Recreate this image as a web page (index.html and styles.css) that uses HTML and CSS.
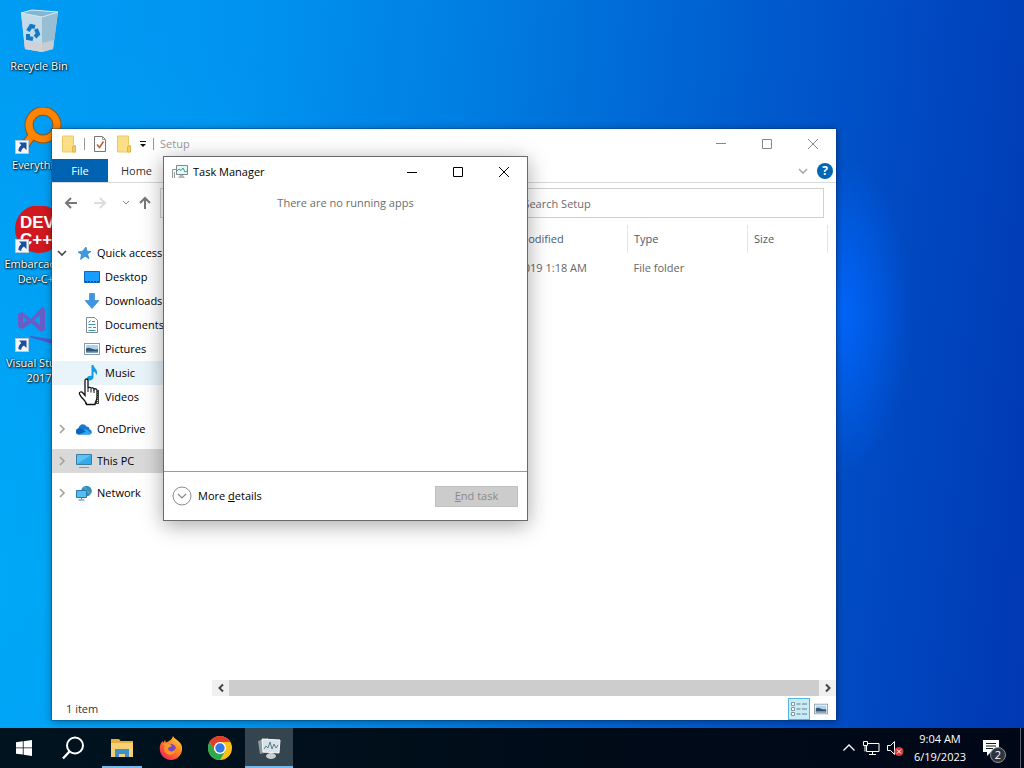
FILE: index.html
```html
<!DOCTYPE html>
<html lang="en">
<head>
    <meta charset="UTF-8">
    <meta name="viewport" content="width=device-width, initial-scale=1.0">
    <title>Desktop</title>
    <link rel="stylesheet" href="styles.css">
</head>
<body>
    <!-- Shared symbols -->
    <svg class="defs" aria-hidden="true">
        <symbol id="shortcut" viewBox="0 0 14 14">
            <rect x="0.5" y="0.5" width="13" height="13" fill="#f4f8fc" stroke="#b8c8d8"/>
            <path d="M4 2.500h7.500v7.500l-2.600-2.500C7 8.600 6.300 10 6.200 12L3.400 11C3.400 8.500 4.400 6.500 6.300 5z" fill="#1b4f9c"/>
        </symbol>
        <symbol id="folder" viewBox="0 0 16 18">
            <path d="M1.500 1h11v9.500h2V17h-13z" fill="#fbdf86" stroke="#edc964"/>
            <path d="M11.500 11.500h3V17h-3z" fill="#f6d063" stroke="#dfb64c"/>
        </symbol>
        <symbol id="chev-right" viewBox="0 0 10 10">
            <path d="M3 1l4 4-4 4" fill="none" stroke="#a0a0a0" stroke-width="1.600"/>
        </symbol>
        <symbol id="picture" viewBox="0 0 16 16">
            <rect x="0.500" y="2.500" width="15" height="11" fill="#fff" stroke="#8c9aa6"/>
            <path d="M2 4h12v4H2z" fill="#a9d4f4"/>
            <path d="M2 7.500c3-2 5 0 7 .5s4 .5 5 0V12H2z" fill="#35556e"/>
            <path d="M2 10.500h12V12H2z" fill="#7fa6bf"/>
        </symbol>
    </svg>

    <main class="desktop">
        <div class="icons">
            <a class="shortcut" href="#">
                <svg viewBox="0 0 48 48">
                    <path d="M6 5l11-3 26 2-5 37-11 3-17-3z" fill="#b9d6e6" opacity=".9"/>
                    <path d="M6 5l21 4 1 35-18-3z" fill="#c3dae8"/>
                    <path d="M27 9l16-5-5 37-11 3z" fill="#98bed3"/>
                    <path d="M9 33l18 2 12-3-1 9-11 3-17-3z" fill="#d3d0d2" opacity=".8"/>
                    <path d="M6 5l11-3 26 2-16 5z" fill="#82b6d3" stroke="#d6e9f2"/>
                    <g fill="none" stroke="#1279c9" stroke-width="4">
                        <path d="M13 23l3-5 4 1"/>
                        <path d="M21 21l2 5-3 3"/>
                        <path d="M18 31l-5-1v-4"/>
                    </g>
                </svg>
                <span>Recycle Bin</span>
            </a>
            <a class="shortcut" href="#">
                <svg viewBox="0 0 48 48">
                    <path d="M18 27L8 41" stroke="#8a5420" stroke-width="9"/>
                    <circle cx="28" cy="18" r="14" fill="none" stroke="#8a5420" stroke-width="9"/>
                    <path d="M18 27L8 41" stroke="#ff8500" stroke-width="7"/>
                    <circle cx="28" cy="18" r="14" fill="none" stroke="#ff8500" stroke-width="7"/>
                    <use href="#shortcut" x="0" y="33" width="14" height="14"/>
                </svg>
                <span>Everything</span>
            </a>
            <a class="shortcut" href="#">
                <svg viewBox="0 0 48 48">
                    <circle cx="24" cy="23" r="24" fill="#cf1820"/>
                    <text x="5" y="22" class="dev-logo">DEV</text>
                    <text x="5" y="39" class="dev-logo">C++</text>
                    <use href="#shortcut" x="0" y="33" width="14" height="14"/>
                </svg>
                <span>Embarcadero Dev-C++</span>
            </a>
            <a class="shortcut" href="#">
                <svg viewBox="0 0 48 48">
                    <path d="M3 9l4-2 9 7L27 2l3 2v21l-4 2-10-9-8 6-5-2z M8 12v6l4-3z M25 10l-6 5 6 5z" fill="#6b5cc5" fill-rule="evenodd"/>
                    <path d="M14 32l34 10v-6L16 31z" fill="#4b5bc4"/>
                    <use href="#shortcut" x="0" y="33" width="14" height="14"/>
                </svg>
                <span>Visual Studio 2017</span>
            </a>
        </div>

        <!-- File Explorer -->
        <section class="window explorer">
            <header class="ex-title">
                <svg class="i18" viewBox="0 0 16 18"><use href="#folder"/></svg>
                <i class="sep"></i>
                <svg class="i18" viewBox="0 0 16 18">
                    <path d="M2.500 1.500h8l3 3v12h-11z" fill="#fff" stroke="#777"/>
                    <path d="M10.500 1.500v3h3" fill="none" stroke="#999"/>
                    <path d="M5 9.500l2.500 3 4-6" fill="none" stroke="#c4582c" stroke-width="1.500"/>
                </svg>
                <svg class="i18" viewBox="0 0 16 18"><use href="#folder"/></svg>
                <svg class="i8" viewBox="0 0 8 8"><path d="M1 1.500h6" stroke="#111"/><path d="M1 4h6L4 7z" fill="#111"/></svg>
                <i class="sep"></i>
                <span class="ex-name">Setup</span>
                <div class="win-buttons">
                    <button aria-label="Minimize"><svg viewBox="0 0 12 12"><path d="M1 5.500h10"/></svg></button>
                    <button aria-label="Maximize"><svg viewBox="0 0 12 12"><path d="M1.500 1.500h9v9h-9z"/></svg></button>
                    <button aria-label="Close"><svg viewBox="0 0 12 12"><path d="M1 1l10 10M11 1L1 11"/></svg></button>
                </div>
            </header>
            <nav class="ribbon">
                <button class="tab file">File</button>
                <button class="tab">Home</button>
                <svg class="ribbon-toggle" viewBox="0 0 10 10"><path d="M1 3l4 4 4-4" fill="none" stroke="#a8a8a8" stroke-width="1.600"/></svg>
                <button class="help" aria-label="Help">?</button>
            </nav>
            <div class="nav-bar">
                <button aria-label="Back"><svg class="i14" viewBox="0 0 14 14"><path d="M13 7H2M7 2L2 7l5 5" stroke="#777"/></svg></button>
                <button class="forward" aria-label="Forward"><svg class="i14" viewBox="0 0 14 14"><path d="M1 7h11M7 2l5 5-5 5" stroke="#dcdcdc"/></svg></button>
                <button class="recent" aria-label="Recent locations"><svg class="i8" viewBox="0 0 8 8"><path d="M1 2l3 3 3-3" stroke="#888"/></svg></button>
                <button aria-label="Up"><svg class="i14" viewBox="0 0 14 14"><path d="M7 13V2M2 7l5-5 5 5" stroke="#777"/></svg></button>
                <input class="address" type="text" aria-label="Address">
                <input class="search" type="text" aria-label="Search" placeholder="Search Setup">
            </div>
            <div class="ex-body">
                <nav class="tree">
                    <a class="root" href="#">
                        <svg class="i10" viewBox="0 0 10 10"><path d="M1 3l4 4 4-4" fill="none" stroke="#444" stroke-width="1.600"/></svg>
                        <svg class="i16" viewBox="0 0 16 16"><path d="M10 2l1 4.200 4 .3-3.500 2.700 1.500 4.500-4-2.500L4.500 14.500l1-5L2 7l4.500-.8z" fill="#3a9be4" stroke="#2477b8" stroke-width=".6"/></svg>
                        Quick access
                    </a>
                    <a class="sub" href="#">
                        <svg class="i16" viewBox="0 0 16 16"><path d="M.5 2.500h15v11H.5z" fill="#1a9cff" stroke="#0b69b7"/><path d="M1 12.500h14" stroke="#0a4d86" stroke-dasharray="2 1"/></svg>
                        Desktop
                    </a>
                    <a class="sub" href="#">
                        <svg class="i16" viewBox="0 0 16 16"><path d="M5.500 .5h5v7H15L8 15.500 1 7.500h4.500z" fill="#3d95e6" stroke="#2d7cc4" stroke-width=".6"/></svg>
                        Downloads
                    </a>
                    <a class="sub" href="#">
                        <svg class="i16" viewBox="0 0 16 16"><path d="M2.500.5h8l3 3v12h-11z" fill="#fff" stroke="#7c8a93"/><path d="M8 4.500h3M4.500 7.500h7M4.500 10.500h3M9 10.500h3M4.500 13.500h7" stroke="#3b9ba0"/><path d="M4.500 5.500l2-2" stroke="#3b7ba0"/></svg>
                        Documents
                    </a>
                    <a class="sub" href="#">
                        <svg class="i16" viewBox="0 0 16 16"><use href="#picture"/></svg>
                        Pictures
                    </a>
                    <a class="sub hover" href="#">
                        <svg class="i16" viewBox="0 0 16 16"><path d="M7.500 0h2c0 3 4.500 4 3.500 9l-1 1c0-2-1-3-2.500-3.500V12c0 4-6.500 4.500-6.500 1.500 0-2.500 3-3 4.500-2.500z" fill="#149be6"/></svg>
                        Music
                    </a>
                    <a class="sub" href="#">
                        <svg class="i16" viewBox="0 0 16 16"><path d="M1 1h14v14H1z" fill="#444"/><path d="M4 2h8v12H4z" fill="#9b7468"/><path d="M2.500 1v14M13.500 1v14" stroke="#ddd" stroke-dasharray="1 1"/></svg>
                        Videos
                    </a>
                    <a class="root apart" href="#">
                        <svg class="i10" viewBox="0 0 10 10"><use href="#chev-right"/></svg>
                        <svg class="i16" viewBox="0 0 16 16"><path d="M3 13.500a3 3 0 0 1-.5-6C3 3 8 1.500 10.500 5.500c2 0 3 1 3 3 3 .5 3 5 0 5z" fill="#1579d1"/><path d="M3 13.500L10 8l5 4c-.5 1-1 1.500-2 1.500z" fill="#2aa7ee"/><path d="M2 7.500c2-.5 3.500 0 5 1.500l3 1.500-7 3C-.5 13-.5 8.500 2 7.500z" fill="#0c63b8"/></svg>
                        OneDrive
                    </a>
                    <a class="root apart selected" href="#">
                        <svg class="i10" viewBox="0 0 10 10"><use href="#chev-right"/></svg>
                        <svg class="i16" viewBox="0 0 16 16"><path d="M.5 1.500h15v10H.5z" fill="#5cc3f5" stroke="#3b7ea5"/><path d="M1 11L15 2v9z" fill="#38a9e8"/><path d="M3 14.500h10" stroke="#6aa5cf"/></svg>
                        This PC
                    </a>
                    <a class="root apart" href="#">
                        <svg class="i10" viewBox="0 0 10 10"><use href="#chev-right"/></svg>
                        <svg class="i16" viewBox="0 0 16 16"><circle cx="10.500" cy="6" r="5.300" fill="#3390bd"/><path d="M8 2c3 1 1 3 3 4s2 3 4 2" fill="none" stroke="#5fb0b0" stroke-width="1.200"/><path d="M.5 5.500h10v7H.5z" fill="#55bdf2" stroke="#2a79a8"/><path d="M2.500 15h6M5.500 12.500v2" stroke="#3c87b4"/></svg>
                        Network
                    </a>
                </nav>
                <div class="files">
                    <table>
                        <colgroup><col><col class="c-date"><col class="c-type"><col class="c-size"></colgroup>
                        <thead>
                            <tr><th></th><th>Date modified</th><th>Type</th><th>Size</th></tr>
                        </thead>
                        <tbody>
                            <tr><td></td><td>7/19/2019 1:18 AM</td><td>File folder</td><td></td></tr>
                        </tbody>
                    </table>
                    <div class="scrollbar">
                        <button aria-label="Scroll left"><svg class="i10" viewBox="0 0 10 10"><path d="M7 1.500L3.500 5 7 8.500"/></svg></button>
                        <div class="thumb"></div>
                        <button aria-label="Scroll right"><svg class="i10" viewBox="0 0 10 10"><path d="M3 1.500L6.500 5 3 8.500"/></svg></button>
                    </div>
                </div>
            </div>
            <footer class="status">
                <span>1 item</span>
                <button class="view on" aria-label="Details view">
                    <svg class="i16" viewBox="0 0 16 16"><path d="M.5 1.500h3v3h-3zM.5 6.500h3v3h-3zM.5 11.500h3v3h-3z" fill="#fff" stroke="#8295a0"/><path d="M5.500 3h4M11 3h5M5.500 8h4M11 8h5M5.500 13h4M11 13h5" stroke="#667d8a"/></svg>
                </button>
                <button class="view" aria-label="Large icons view">
                    <svg class="i14" viewBox="0 0 16 16"><use href="#picture"/></svg>
                </button>
            </footer>
        </section>

        <!-- Task Manager -->
        <section class="window taskmgr">
            <header class="tm-title">
                <svg class="i16" viewBox="0 0 16 16"><path d="M.5 14V5.500h4M2.500 14V8" fill="none" stroke="#8d979c"/><path d="M4.500 1.500h11v9h-11z" fill="#eaf6f5" stroke="#7c898f"/><path d="M5 7l2-2 2 1.500L11 4l2 4 2-1" fill="none" stroke="#2aa59a"/><path d="M8 11l-2 3h7l-2-3z" fill="#b1b9bd"/></svg>
                <h1>Task Manager</h1>
                <div class="win-buttons">
                    <button aria-label="Minimize"><svg viewBox="0 0 12 12"><path d="M1 6.500h10"/></svg></button>
                    <button aria-label="Maximize"><svg viewBox="0 0 12 12"><path d="M1.500 1.500h9v9h-9z"/></svg></button>
                    <button aria-label="Close"><svg viewBox="0 0 12 12"><path d="M1 1l10 10M11 1L1 11"/></svg></button>
                </div>
            </header>
            <p class="empty">There are no running apps</p>
            <footer class="tm-foot">
                <button class="more">
                    <svg viewBox="0 0 20 20"><circle cx="10" cy="10" r="9" fill="#fff" stroke="#8a8a8a"/><path d="M6 8l4 4 4-4" fill="none" stroke="#888" stroke-width="1.200"/></svg>
                    <span>More <u>d</u>etails</span>
                </button>
                <button class="end" disabled><u>E</u>nd task</button>
            </footer>
        </section>

        <svg class="cursor" viewBox="0 0 22 28">
            <path d="M7 2.500c0-2 3-2 3 0V10c.5-1 3-1 3 .5.5-1 3-.8 3 .8.7-1 3-.6 3 1V19c0 4-2 4-2 7.500H8.500C8.500 23 3 20 1.500 16c-.8-2 2-3 3.500-1l2 2.500z" fill="#fff" stroke="#111" stroke-width="1.300"/>
            <path d="M10 10v4M13 11v3.500M16 12v3" stroke="#111" fill="none"/>
        </svg>
    </main>

    <footer class="taskbar">
        <button aria-label="Start">
            <svg class="i16" viewBox="0 0 16 16"><path d="M0 2.300L6.800 1.300v6.200H0zM7.600 1.200L16 0v7.500H7.600zM0 8.300h6.800v6.300L0 13.700zM7.600 8.300H16V16l-8.400-1.300z" fill="#fff"/></svg>
        </button>
        <button aria-label="Search">
            <svg class="i24" viewBox="0 0 24 24"><circle cx="14" cy="9.500" r="8" fill="none" stroke="#fff" stroke-width="2"/><path d="M8.500 15.500L2 22.500" stroke="#fff" stroke-width="2.400"/></svg>
        </button>
        <button class="open" aria-label="File Explorer">
            <svg class="i24" viewBox="0 0 24 24"><path d="M1 3h8l1.500 2H23v16H1z" fill="#e8ae3c"/><path d="M1 7h22v14H1z" fill="#f6d077"/><path d="M5 13h14v8h-4v-3H9v3H5z" fill="#3f8fc8"/></svg>
        </button>
        <button aria-label="Firefox">
            <svg class="i24" viewBox="0 0 24 24">
                <defs><linearGradient id="fox" x1="1" y1="0" x2="0.200" y2="1"><stop offset="0" stop-color="#ffe54a"/><stop offset=".45" stop-color="#ff8a1e"/><stop offset="1" stop-color="#f5205c"/></linearGradient></defs>
                <path d="M14 0c1 3 6 4 8.500 9C25 17 19 24 12 24S-.5 18 1 10c.3-2 1.500-4 2.500-5l.5 2 2-3 1 2.500C10 5 13 4 14 0z" fill="url(#fox)"/>
                <circle cx="12" cy="13" r="5" fill="#7846c8"/>
                <path d="M4 8c3-2 7-1 9 2l-4 2c0 4 6 5 8 0 1 7-8 9-11 4-1.500-3-1-5 0-6z" fill="#ff9624"/>
            </svg>
        </button>
        <button aria-label="Chrome">
            <svg class="i24" viewBox="0 0 24 24">
                <circle cx="12" cy="12" r="12" fill="#fbc116"/>
                <path d="M1.600 6A12 12 0 0 0 12 24l5.200-9L12 12 6.800 15z" fill="#2da94f"/>
                <path d="M1.600 6A12 12 0 0 1 22.400 6H12a6 6 0 0 0-5.500 8.500z" fill="#e33b2e"/>
                <circle cx="12" cy="12" r="6" fill="#fff"/><circle cx="12" cy="12" r="4.700" fill="#3478e5"/>
            </svg>
        </button>
        <button class="open active" aria-label="Task Manager">
            <svg class="i24" viewBox="0 0 24 24"><path d="M1 5l10-3v14L3 18z" fill="#8d9ba1"/><path d="M5 3l18 1-1 13-16-1z" fill="#d9e2e6" stroke="#f5f8f9"/><path d="M7 13l2-3 2 2 2-6 2 7 2-5 2 4 2-3" fill="none" stroke="#56808f"/><ellipse cx="14" cy="20" rx="5" ry="3" fill="#c7cfd2"/></svg>
        </button>
        <div class="tray">
            <svg class="i14" viewBox="0 0 14 14"><path d="M1.500 9.500L7 4l5.500 5.500" fill="none" stroke="#fff" stroke-width="1.300"/></svg>
            <svg class="i18" viewBox="0 0 18 18"><path d="M5 4.500h12v8H4.500V7M7 15.500h7M10.500 12.500v3M1.500 2.500h4v4h-4zM3 6.500v6" fill="none" stroke="#fff"/></svg>
            <svg class="i18" viewBox="0 0 18 18"><path d="M1.500 6.500h3l4-4v13l-4-4h-3z" fill="none" stroke="#fff"/><circle cx="13" cy="12.500" r="4.500" fill="#d63b3b"/><path d="M11 10.500l4 4M15 10.500l-4 4" stroke="#fff"/></svg>
            <div class="clock"><span>9:04 AM</span><span>6/19/2023</span></div>
            <button class="notes" aria-label="Notifications">
                <svg class="i18" viewBox="0 0 18 18"><path d="M1 1h16v12H9l-4 4v-4H1z" fill="#fff"/><path d="M4 4.500h10M4 7h10M4 9.500h7" stroke="#111b25"/></svg>
                <span class="badge">2</span>
            </button>
        </div>
    </footer>
</body>
</html>
```
FILE: styles.css
```css
* {
    box-sizing: border-box;
}

body {
    margin: 0;
    height: 100vh;
    display: flex;
    flex-direction: column;
    overflow: hidden;
    font-family: "Open Sans", "Noto Sans", sans-serif;
    font-size: 11px;
    line-height: 16px;
    color: #000;
}

button, input {
    font: inherit;
    color: inherit;
    border: none;
    background: none;
    padding: 0;
    margin: 0;
}

a {
    color: inherit;
    text-decoration: none;
}

svg {
    flex: none;
    display: block;
}

.defs {
    position: absolute;
    width: 0;
    height: 0;
}

.i8 { width: 8px; height: 8px; }
.i10 { width: 10px; height: 10px; }
.i14 { width: 14px; height: 14px; }
.i16 { width: 16px; height: 16px; }
.i18 { width: 18px; height: 18px; }
.i24 { width: 24px; height: 24px; }

/* Desktop */
.desktop {
    flex: 1;
    position: relative;
    background:
        radial-gradient(ellipse 7% 22% at 82% 43%, rgba(0, 104, 255, 0.9), rgba(0, 96, 255, 0) 100%),
        radial-gradient(ellipse 55% 80% at 0 80%, rgba(0, 190, 255, 0.4), rgba(0, 190, 255, 0) 100%),
        linear-gradient(96deg, #009cf4 0%, #0094f0 22%, #007ce0 45%, #0060d0 66%, #004cc4 82%, #0038b2 100%);
}

.icons {
    width: 78px;
    padding-top: 8px;
}

.shortcut {
    display: flex;
    flex-direction: column;
    align-items: center;
    gap: 2px;
    min-height: 99px;
    color: #fff;
    line-height: 15px;
    text-align: center;
    text-shadow: 1px 1px 2px #000, 0 0 2px #000;
}

.shortcut svg {
    width: 48px;
    height: 48px;
}

.dev-logo {
    font: bold 17px "Liberation Sans", Arial, sans-serif;
    fill: #fff;
    text-shadow: none;
}

.window {
    position: absolute;
    display: flex;
    flex-direction: column;
    background: #fff;
}

.win-buttons {
    display: flex;
    margin-left: auto;
}

.win-buttons button {
    width: 46px;
    height: 30px;
    display: flex;
    align-items: center;
    justify-content: center;
}

.win-buttons svg {
    width: 12px;
    height: 12px;
    fill: none;
    stroke: currentColor;
}

/* File Explorer */
.explorer {
    top: 129px;
    left: 52px;
    right: 188px;
    bottom: 8px;
    box-shadow: 0 0 0 1px rgba(0, 50, 100, 0.3), 0 1px 8px rgba(0, 0, 0, 0.4);
    color: #333;
}

.ex-title {
    display: flex;
    align-items: center;
    gap: 6px;
    height: 30px;
    padding-left: 8px;
    color: #999;
}

.ex-title .win-buttons {
    color: #888;
}

.sep {
    width: 1px;
    height: 12px;
    background: #999;
}

.ribbon {
    display: flex;
    align-items: center;
    height: 24px;
    padding-right: 3px;
    border-bottom: 1px solid #d8d8d8;
}

.tab {
    width: 57px;
    height: 23px;
}

.file {
    width: 56px;
    background: #0063b1;
    color: #fff;
}

.ribbon-toggle {
    width: 10px;
    height: 10px;
    margin-left: auto;
    margin-right: 9px;
}

.help {
    width: 16px;
    height: 16px;
    border-radius: 50%;
    background: #0067b5;
    color: #fff;
    font-size: 12px;
    font-weight: bold;
}

.nav-bar {
    display: flex;
    align-items: center;
    gap: 8px;
    height: 40px;
    padding: 0 12px;
}

.nav-bar button {
    height: 30px;
    display: flex;
    align-items: center;
}

.nav-bar .forward {
    margin: 0 7px;
}

.nav-bar button svg {
    fill: none;
    stroke-width: 2;
}

.nav-bar .recent svg {
    stroke-width: 1;
}

.nav-bar input {
    height: 30px;
    border: 1px solid #d0d0d0;
}

.address {
    flex: 1;
    min-width: 0;
}

.search {
    width: 46%;
    padding-left: 48px;
}

.search::placeholder {
    color: #6d6d6d;
    opacity: 1;
}

.ex-body {
    flex: 1;
    display: flex;
    min-height: 0;
}

.tree {
    width: 160px;
    padding-top: 18px;
    color: #000;
}

.tree a {
    display: flex;
    align-items: center;
    gap: 5px;
    height: 24px;
    white-space: nowrap;
}

.tree .root {
    padding-left: 5px;
}

.tree .root .i10 {
    margin-right: 4px;
}

.tree .sub {
    padding-left: 32px;
}

.tree .apart {
    margin-top: 8px;
}

.tree .hover {
    background: #e8f3fa;
}

.tree .selected {
    background: #d9d9d9;
}

.files {
    flex: 1;
    display: flex;
    flex-direction: column;
    justify-content: space-between;
    padding-top: 2px;
}

table {
    width: calc(100% - 8px);
    table-layout: fixed;
    border-collapse: collapse;
    color: #666;
}

.c-date { width: 143px; }
.c-type { width: 120px; }
.c-size { width: 80px; }

th {
    height: 28px;
    padding: 0 6px;
    border-right: 1px solid #e5e5e5;
    font-weight: normal;
    text-align: left;
    color: #4c5a6b;
}

td {
    height: 30px;
    padding: 0 6px;
    white-space: nowrap;
}

.scrollbar {
    display: flex;
    height: 16px;
    background: #f0f0f0;
}

.scrollbar button {
    width: 17px;
    display: flex;
    align-items: center;
    justify-content: center;
}

.scrollbar svg {
    fill: none;
    stroke: #444;
    stroke-width: 2;
}

.thumb {
    flex: 1;
    background: #cdcdcd;
}

.status {
    display: flex;
    align-items: center;
    height: 24px;
    padding: 1px 4px 0 14px;
}

.view {
    width: 22px;
    height: 22px;
    display: flex;
    align-items: center;
    justify-content: center;
}

.view.on {
    margin-left: auto;
    border: 1px solid #58b4d8;
    background: #c9ebf8;
}

/* Task Manager */
.taskmgr {
    top: 156px;
    left: 163px;
    width: 365px;
    min-height: 365px;
    border: 1px solid #6a6a6a;
    box-shadow: 0 4px 20px rgba(0, 0, 0, 0.35);
}

.tm-title {
    display: flex;
    align-items: center;
    gap: 5px;
    height: 30px;
    padding-left: 8px;
}

h1 {
    margin: 0;
    font-size: 11px;
    font-weight: normal;
}

.empty {
    flex: 1;
    margin: 0;
    padding-top: 8px;
    text-align: center;
    color: #6d6d6d;
}

.tm-foot {
    display: flex;
    align-items: center;
    justify-content: space-between;
    height: 49px;
    padding: 0 9px 0 8px;
    border-top: 1px solid #999;
}

.more {
    display: flex;
    align-items: center;
    gap: 6px;
}

.more svg {
    width: 20px;
    height: 20px;
}

.end {
    width: 83px;
    height: 21px;
    background: #ccc;
    border: 1px solid #c0c0c0;
    color: #8a8a8a;
}

.cursor {
    position: absolute;
    left: 78px;
    top: 378px;
    width: 22px;
    height: 28px;
}

/* Taskbar */
.taskbar {
    display: flex;
    gap: 1px;
    height: 40px;
    background: linear-gradient(90deg, #00141f, #000b18 60%, #000818);
    color: #fff;
}

.taskbar > button {
    width: 48px;
    display: flex;
    align-items: center;
    justify-content: center;
    position: relative;
}

.taskbar .active {
    background: #34454f;
}

.open::after {
    content: "";
    position: absolute;
    left: 4px;
    right: 4px;
    bottom: 0;
    height: 2px;
    background: #76b9ed;
}

.active::after {
    left: 0;
    right: 0;
}

.tray {
    margin-left: auto;
    margin-right: 3px;
    padding-right: 20px;
    border-right: 1px solid #59636e;
    display: flex;
    align-items: center;
    gap: 6px;
}

.clock {
    width: 60px;
    display: flex;
    flex-direction: column;
    align-items: center;
    line-height: 18px;
}

.notes {
    position: relative;
    margin-left: 6px;
}

.badge {
    position: absolute;
    left: 8px;
    top: 8px;
    width: 16px;
    height: 16px;
    border: 1px solid #8a929a;
    border-radius: 50%;
    background: #2c353e;
    line-height: 14px;
}
```
